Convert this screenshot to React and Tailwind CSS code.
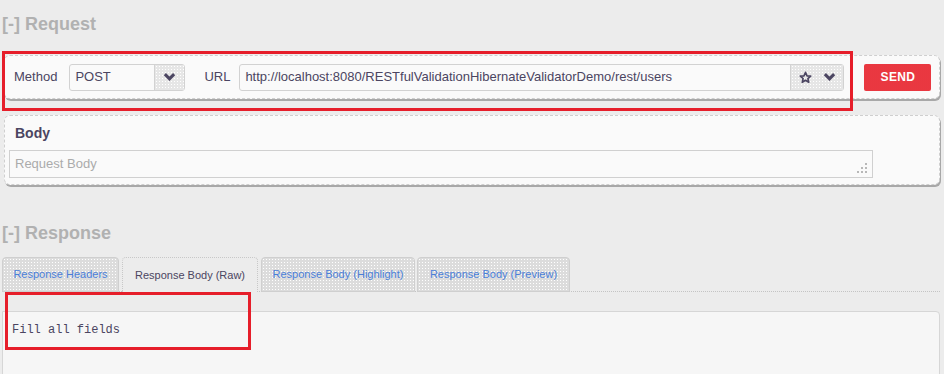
import React from "react";

const Chevron = ({ className = "" }) => (
  <svg viewBox="0 0 16 12" className={className} fill="#4b4561">
    <path d="M1 3.8 L3.6 1.2 L8 5.4 L12.4 1.2 L15 3.8 L8 10.8 Z" />
  </svg>
);

const Star = ({ className = "" }) => (
  <svg viewBox="0 0 24 24" className={className} fill="none" stroke="#4b4561" strokeWidth="3" strokeLinejoin="round">
    <path d="M12 2.5 L14.8 8.9 L21.6 9.4 L16.4 13.9 L18 20.7 L12 17.1 L6 20.7 L7.6 13.9 L2.4 9.4 L9.2 8.9 Z" />
  </svg>
);

const dots =
  "bg-[radial-gradient(#ffffff_0.8px,transparent_0.9px)] bg-[length:3px_3px]";

export default function App() {
  return (
    <div className="relative w-[944px] h-[374px] overflow-hidden bg-[#ececec] font-['Liberation_Sans',Arial,sans-serif] text-[#4b4561]">
      {/* Request heading */}
      <div className="pt-[12px] pl-[2px] h-[36px] leading-[24px] text-[18px] font-bold text-[#b1b1b1]">
        [-] Request
      </div>

      {/* Request card */}
      <div className="mt-[19px] ml-[4px] w-[936px] h-[44px] rounded-[6px] border border-dashed border-[#cfcfcf] bg-[#fafafa] shadow-[1px_2px_0_#a8a8a8] flex items-center pl-[9px]">
        <span className="text-[13px] text-[#4b4561]">Method</span>
        <div className="ml-[12px] w-[116px] h-[27px] flex rounded-[3px] border border-[#d2d2d2] bg-[#fafafa]">
          <div className="flex-1 flex items-center pl-[5px] text-[13px] text-[#4b4561]">POST</div>
          <div className={`w-[30px] border-l border-[#d2d2d2] bg-[#e6e6e6] ${dots} flex items-center justify-center`}>
            <Chevron className="w-[13px] h-[10px]" />
          </div>
        </div>
        <span className="ml-[19px] text-[13px] text-[#4b4561]">URL</span>
        <div className="ml-[9px] w-[605px] h-[27px] flex rounded-[3px] border border-[#d2d2d2] bg-[#fafafa]">
          <div className="flex-1 flex items-center pl-[5px] text-[13px] text-[#4b4561] whitespace-nowrap overflow-hidden">
            http://localhost:8080/RESTfulValidationHibernateValidatorDemo/rest/users
          </div>
          <div className={`w-[53px] border-l border-[#d2d2d2] bg-[#e6e6e6] ${dots} flex items-center justify-center gap-[11px]`}>
            <Star className="w-[13px] h-[13px]" />
            <Chevron className="w-[13px] h-[10px]" />
          </div>
        </div>
        <button className="ml-[20px] w-[67px] h-[27px] rounded-[2px] bg-[#e2202a] bg-[radial-gradient(#ea3a42_0.7px,transparent_0.8px)] bg-[length:2px_2px] text-white text-[12px] font-bold tracking-[0.3px] flex items-center justify-center">
          SEND
        </button>
      </div>

      {/* Body card */}
      <div className="mt-[16px] ml-[4px] w-[936px] h-[70px] rounded-[6px] border border-dashed border-[#cfcfcf] bg-[#fafafa] shadow-[1px_2px_0_#a8a8a8] pt-[8px]">
        <div className="pl-[10px] text-[14px] font-bold leading-[18px] text-[#4b4561]">Body</div>
        <div className="mt-[8px] ml-[4px] w-[864px] h-[28px] border border-[#d0d0d0] bg-[#fafafa] relative flex items-center pl-[5px] text-[13px] text-[#ababab]">
          Request Body
          <svg className="absolute right-[4px] bottom-[3px]" width="12" height="12" viewBox="0 0 12 12" fill="#b8b8b8">
            <rect x="9" y="1" width="2" height="2" />
            <rect x="9" y="5" width="2" height="2" />
            <rect x="5" y="5" width="2" height="2" />
            <rect x="9" y="9" width="2" height="2" />
            <rect x="5" y="9" width="2" height="2" />
            <rect x="1" y="9" width="2" height="2" />
          </svg>
        </div>
      </div>

      {/* Response heading */}
      <div className="mt-[36px] pl-[2px] h-[24px] leading-[24px] text-[18px] font-bold text-[#b1b1b1]">
        [-] Response
      </div>

      {/* Tabs */}
      <div className="mt-[11px] ml-[2px] w-[938px] h-[36px] flex items-end border-b border-dotted border-[#c4c4c4]">
        <div className={`w-[117px] h-[35px] -mb-px rounded-t-[4px] border border-[#cfcfcf] bg-[#dcdcdc] ${dots} flex items-center justify-center text-[11px] text-[#4a7ed8]`}>
          Response Headers
        </div>
        <div className="ml-[3px] w-[136px] h-[35px] -mb-px rounded-t-[4px] border border-b-0 border-dotted border-[#c8c8c8] bg-[#ececec] flex items-center justify-center text-[11px] text-[#4b4561]">
          Response Body (Raw)
        </div>
        <div className={`ml-[3px] w-[154px] h-[35px] -mb-px rounded-t-[4px] border border-[#cfcfcf] bg-[#dcdcdc] ${dots} flex items-center justify-center text-[11px] text-[#4a7ed8]`}>
          Response Body (Highlight)
        </div>
        <div className={`ml-[2px] w-[153px] h-[35px] -mb-px rounded-t-[4px] border border-[#cfcfcf] bg-[#dcdcdc] ${dots} flex items-center justify-center text-[11px] text-[#4a7ed8]`}>
          Response Body (Preview)
        </div>
      </div>

      {/* Response body panel */}
      <div className="mt-[19px] ml-[2px] w-[938px] h-[80px] rounded-tr-[4px] border border-[#d6d6d6] bg-[#f6f6f6] pt-[11px] pl-[9px]">
        <div className="font-['Liberation_Mono','Courier_New',monospace] text-[12px] leading-[14px] text-[#4b4561]">
          Fill all fields
        </div>
      </div>

      {/* Red annotation boxes */}
      <div className="absolute left-[2px] top-[51px] w-[851px] h-[60px] border-[3px] border-[#e61e2a] pointer-events-none" />
      <div className="absolute left-[5px] top-[292px] w-[246px] h-[58px] border-[3px] border-[#e61e2a] pointer-events-none" />
    </div>
  );
}
